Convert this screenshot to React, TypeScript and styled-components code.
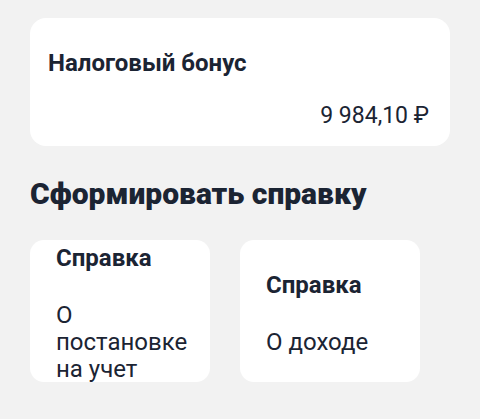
import React from 'react';
import styled, { createGlobalStyle } from 'styled-components';

const GlobalStyle = createGlobalStyle`
  html, body {
    margin: 0;
    padding: 0;
    background: #f2f2f2;
  }
  body {
    font-family: Roboto, 'Noto Sans', sans-serif;
    color: #1b2433;
  }
`;

const Page = styled.div`
  width: 480px;
  height: 419px;
  padding: 18px 30px 0;
  box-sizing: border-box;
  display: flex;
  flex-direction: column;
`;

const BonusCard = styled.div`
  background: #fff;
  border-radius: 16px;
  padding: 31px 21px 0 18px;
  display: flex;
  flex-direction: column;
  height: 128px;
  box-sizing: border-box;
`;

const BonusTitle = styled.div`
  font-size: 24px;
  line-height: 28px;
  font-weight: 700;
`;

const Amount = styled.div`
  margin-top: 26px;
  font-size: 23px;
  line-height: 26px;
  text-align: right;
`;

const Heading = styled.h2`
  margin: 30px 0 0;
  font-size: 30px;
  line-height: 36px;
  font-weight: 900;
`;

const Tiles = styled.div`
  margin-top: 28px;
  display: flex;
  gap: 30px;
`;

const Tile = styled.div`
  width: 180px;
  height: 142px;
  box-sizing: border-box;
  background: #fff;
  border-radius: 14px;
  padding: 5px 14px 0 26px;
  display: flex;
  flex-direction: column;
  justify-content: center;
  overflow: hidden;
`;

const TileTitle = styled.div`
  font-size: 24px;
  line-height: 28px;
  font-weight: 700;
`;

const TileText = styled.div`
  margin-top: 30px;
  font-size: 24px;
  line-height: 27px;
`;

const docs = [
  { title: 'Справка', text: 'О постановке на учет' },
  { title: 'Справка', text: 'О доходе' },
];

export default function App() {
  return (
    <>
      <GlobalStyle />
      <Page>
        <BonusCard>
          <BonusTitle>Налоговый бонус</BonusTitle>
          <Amount>9 984,10 ₽</Amount>
        </BonusCard>
        <Heading>Сформировать справку</Heading>
        <Tiles>
          {docs.map((d) => (
            <Tile key={d.text}>
              <TileTitle>{d.title}</TileTitle>
              <TileText>{d.text}</TileText>
            </Tile>
          ))}
        </Tiles>
      </Page>
    </>
  );
}
